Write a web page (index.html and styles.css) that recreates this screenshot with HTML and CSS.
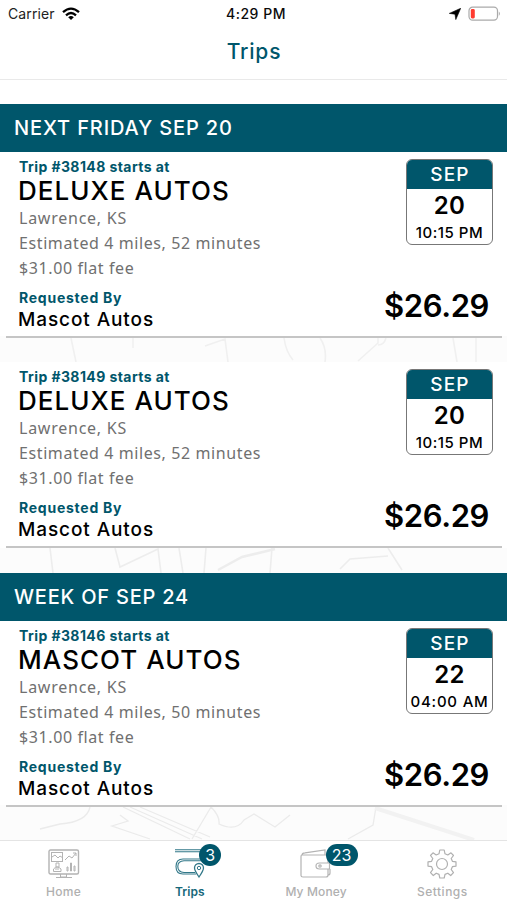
FILE: index.html
```html
<!DOCTYPE html>
<html lang="en">
<head>
<meta charset="utf-8">
<title>Trips</title>
<link rel="stylesheet" href="styles.css">
</head>
<body>
<div class="app">
  <header class="top">
    <div class="status">
      <div class="carrier"><span>Carrier</span>
        <svg width="18" height="14" viewBox="0 0 18 14" fill="none" stroke="#000" stroke-width="2.3"><path d="M1 5.2Q9-2 17 5.2M4 8.3Q9 3.8 14 8.3"/><path d="M6.2 10.2Q9 8 11.8 10.2L9 13Z" fill="#000" stroke="none"/></svg>
      </div>
      <div class="clock">4:29 PM</div>
      <div class="power">
        <svg width="12" height="12" viewBox="0 0 12 12"><path d="M11.7.3 6.8 11.6 6 6.200.3 5.4Z" stroke="#000" stroke-width=".6"/></svg>
        <svg width="33" height="16" viewBox="0 0 33 16"><rect x="1" y="1.2" width="28.5" height="13" rx="3.6" fill="#fff" stroke="#aaa" stroke-width="1.2"/><rect x="2.8" y="3" width="4" height="9.4" rx="1.4" fill="#ff3b30"/><path d="M30.8 5.5Q33 7.7 30.8 10Z" fill="#aaa"/></svg>
      </div>
    </div>
    <h1>Trips</h1>
  </header>
  <main>
    <div class="spacer"></div>
    <h2 class="next">NEXT FRIDAY SEP 20</h2>
    <article class="card">
      <div class="info">
        <div class="label trip">Trip #38148 starts at</div>
        <div class="name deluxe">DELUXE AUTOS</div>
        <div class="meta city">Lawrence, KS</div>
        <div class="meta est">Estimated 4 miles, 52 minutes</div>
        <div class="meta fee">$31.00 flat fee</div>
        <div class="label req">Requested By</div>
        <div class="by">Mascot Autos</div>
      </div>
      <div class="side">
        <div class="date"><div class="month">SEP</div><div class="day">20</div><div class="time pm">10:15 PM</div></div>
        <div class="price">$26.29</div>
      </div>
    </article>
    <svg class="map" width="507" height="26" viewBox="0 0 507 26" fill="none" stroke="#f0f0f0" stroke-width="1.6"><path d="M71 2 76 26M133 12V2M205 10 225 3 228 26M284 2Q286 16 293 24M320 2Q327 12 325 26M358 25 378 7V2M378 9Q384 9 386 2M453 2 457 26M476 2V26"/></svg>
    <article class="card">
      <div class="info">
        <div class="label trip">Trip #38149 starts at</div>
        <div class="name deluxe">DELUXE AUTOS</div>
        <div class="meta city">Lawrence, KS</div>
        <div class="meta est">Estimated 4 miles, 52 minutes</div>
        <div class="meta fee">$31.00 flat fee</div>
        <div class="label req">Requested By</div>
        <div class="by">Mascot Autos</div>
      </div>
      <div class="side">
        <div class="date"><div class="month">SEP</div><div class="day">20</div><div class="time pm">10:15 PM</div></div>
        <div class="price">$26.29</div>
      </div>
    </article>
    <svg class="map flush" width="507" height="25" viewBox="0 0 507 25" fill="none" stroke="#ededed" stroke-width="1.6"><path d="M50 0 53 25M115 0 120 19 158 1 161 25M179 0 183 25M206 0 204 25M272 0 270 25M340 21 350 11 388 8M388 0 402 22"/><path d="M218 22 242 9 275 1" stroke-width="2.5"/></svg>
    <h2 class="week">WEEK OF SEP 24</h2>
    <article class="card">
      <div class="info">
        <div class="label trip">Trip #38146 starts at</div>
        <div class="name mascot">MASCOT AUTOS</div>
        <div class="meta city">Lawrence, KS</div>
        <div class="meta est">Estimated 4 miles, 50 minutes</div>
        <div class="meta fee">$31.00 flat fee</div>
        <div class="label req">Requested By</div>
        <div class="by">Mascot Autos</div>
      </div>
      <div class="side">
        <div class="date"><div class="month">SEP</div><div class="day">22</div><div class="time am">04:00 AM</div></div>
        <div class="price">$26.29</div>
      </div>
    </article>
    <svg class="map" width="507" height="35" viewBox="0 0 507 35" fill="none" stroke="#ebebeb" stroke-width="1.3"><path d="M90 2Q87 17 60 19L40 24M120 10 128 16 112 21 150 34M123 2 190 34M130 2 202 34M140 2 210 32M211 2 192 34M211 2Q220 11 219 19Q236 27 244 15L254 9 275 22 290 10M348 34 373 20 376 2"/><path d="M375 3 474 35" stroke="#f2f2f2" stroke-width="4"/></svg>
  </main>
  <nav>
    <div class="tab home">
      <svg width="32" height="30" viewBox="0 0 32 30" fill="none" stroke="#b3b3b3"><rect x="1" y="1" width="29.5" height="24" rx="1.5" stroke-width="1.4"/><rect x="3.5" y="3.5" width="11" height="9"/><path d="m4 8 3-2 3 3 2-2 3 2M17 11l4-4 3 2 4-5M25 4h3v3"/><path d="M8 14h3v4H8zM5.5 22.5V20Q9 16 13 20v2.500ZM7 20h4M19 22v-4h1v4zM22.500 22v-8h1v8zM26 22v-5h1v5zM12.500 25v3h6v-3M8 28.500h16"/></svg>
      <span>Home</span>
    </div>
    <div class="tab active">
      <svg width="32" height="30" viewBox="0 0 32 30" fill="none" stroke="#327889"><path d="M1 .7h27M1 2.800h27M31 10H9Q2 10 2 17.500T9 25h13M31 11.800H10Q3.800 12 3.800 17.500T10 23.500h11" stroke-width="1.1"/><path d="M25 28Q20.500 21.500 20.500 19A4.500 4.500 0 0 1 29.500 19Q29.500 21.500 25 28Z" fill="#fff" stroke-width="1.3"/><circle cx="25" cy="19" r="1.7"/></svg>
      <span>Trips</span><b class="badge one">3</b>
    </div>
    <div class="tab money">
      <svg width="32" height="30" viewBox="0 0 32 30" fill="none" stroke="#b3b3b3" stroke-width="1.2"><path d="M28 14V8Q28 6 26 6H2Q1 6 1 8V26.500Q1 28 3 28H26Q28 28 28 26V20M2 6Q2 4 5 3.800L25 1V6M28 9Q30 9 30 11V14M30 20V24Q30 26 28 26M29.500 14H19.500Q16 14 16 17T19.500 20H29.500Z"/><circle cx="20" cy="17" r="1.200"/></svg>
      <span>My Money</span><b class="badge two">23</b>
    </div>
    <div class="tab settings">
      <svg width="32" height="30" viewBox="-16 -15 32 30" fill="none" stroke="#b0b0b0" stroke-width="1.2" stroke-linejoin="round"><path d="M-2.200-14H2.200L3-10.200 5.800-9 9-11.200 11.500-8.500 9.200-5.500 10.400-2.700 14-2.100V2.100L10.400 2.700 9.200 5.500 11.500 8.700 8.700 11.500 5.800 9.200 3 10.400 2.200 14H-2.200L-3 10.400-5.800 9.200-8.700 11.500-11.500 8.700-9.200 5.500-10.400 2.700-14 2.100V-2.100L-10.400-2.700-9.200-5.500-11.500-8.500-9-11.200-5.800-9-3-10.200Z"/><circle r="5.500"/></svg>
      <span>Settings</span>
    </div>
  </nav>
</div>
</body>
</html>
```
FILE: styles.css
```css
* { box-sizing: border-box; }
body { margin: 0; background: #fff; font-family: Inter, "Liberation Sans", sans-serif; color: #0b0b0b; }
.app { width: 507px; height: 900px; display: flex; flex-direction: column; overflow: hidden; white-space: nowrap; }
.top { height: 80px; border-bottom: 1.5px solid #e9e9e9; }
.status { height: 27px; padding: 0 6px 0 8px; display: grid; grid-template-columns: 1fr auto 1fr; align-items: center; font-size: 14px; }
.carrier { display: flex; align-items: center; gap: 7px; color: #222; letter-spacing: 0.1px; }
.clock { font-weight: 500; letter-spacing: 0.5px; padding-left: 3px; }
.power { display: flex; align-items: center; justify-content: flex-end; gap: 7px; }
h1 { margin: 0; text-align: center; font-size: 21px; line-height: 50px; font-weight: 500; color: #00566b; letter-spacing: 0.8px; padding-left: 1px; }
main { position: relative; z-index: 0; flex: 1; background: #fff; }
.spacer { height: 24px; background: #fff; }
h2 { margin: 0; height: 48px; line-height: 49px; padding-left: 14px; background: #00566b; color: #fff; font-size: 20px; font-weight: 500; }
.next { letter-spacing: 0.88px; }
.week { letter-spacing: 0.78px; }
.card { height: 184px; background: #fff; display: flex; justify-content: space-between; padding: 6px 12px 0 13px; margin: 0 5px 2px 6px; box-shadow: 0 2px #c5c5c5; }
.label { color: #00566b; font-size: 14px; font-weight: 700; line-height: 17px; }
.trip { letter-spacing: 0.42px; }
.name { font-size: 26px; line-height: 32px; font-weight: 500; letter-spacing: 1.05px; margin-left: -1px; color: #000; }
.meta { font-family: "Noto Sans", sans-serif; font-size: 16px; line-height: 25px; color: #707070; letter-spacing: 0.6px; }
.city { letter-spacing: 0.75px; margin-top: -1px; }
.req { margin-top: 7px; line-height: 20px; letter-spacing: 0.75px; }
.by { font-size: 19px; line-height: 23px; font-weight: 500; letter-spacing: 0.9px; margin-left: -1px; color: #000; }
.side { display: flex; flex-direction: column; align-items: flex-end; }
.date { width: 87px; height: 86px; margin: 1px -3px 0 0; border: 1.5px solid #777; border-radius: 6px; overflow: hidden; text-align: center; font-weight: 600; color: #000; }
.month { height: 29px; line-height: 29px; background: #00566b; color: #fff; font-size: 19px; font-weight: 500; letter-spacing: 1.2px; padding-left: 1px; }
.day { font-size: 24px; line-height: 33px; letter-spacing: .3px; }
.time { font-size: 15px; line-height: 21px; letter-spacing: .5px; }
.pm { font-weight: 500; }
.am { font-weight: 500; letter-spacing: .8px; }
.price { margin-top: 42px; font-size: 31px; line-height: 38px; font-weight: 600; letter-spacing: -.4px; margin-right: 1px; color: #000; }
.map { display: block; position: relative; z-index: -1; background: #fcfcfc; margin-top: -2px; }
.flush { margin-top: 0; }
nav { height: 60px; border-top: 1.5px solid #e4e4e4; background: #fff; display: grid; grid-template-columns: repeat(4, 1fr); padding: 0 1px; position: relative; z-index: 1; }
.tab { position: relative; display: flex; flex-direction: column; align-items: center; padding: 8px 1px 0 0; font-size: 12px; font-weight: 500; color: #b0b0b0; letter-spacing: .3px; }
.tab span { line-height: 15px; margin-top: 5px; }
.money { letter-spacing: .15px; }
.settings { letter-spacing: .5px; }
.active { color: #16677a; font-weight: 600; letter-spacing: .1px; }
.badge { position: absolute; top: 3px; height: 22px; border-radius: 11px; background: #00566b; color: #fff; text-align: center; line-height: 22px; font-size: 16px; font-weight: 400; letter-spacing: 0; }
.one { left: 72px; width: 22px; }
.two { left: 72px; width: 32px; }
```
